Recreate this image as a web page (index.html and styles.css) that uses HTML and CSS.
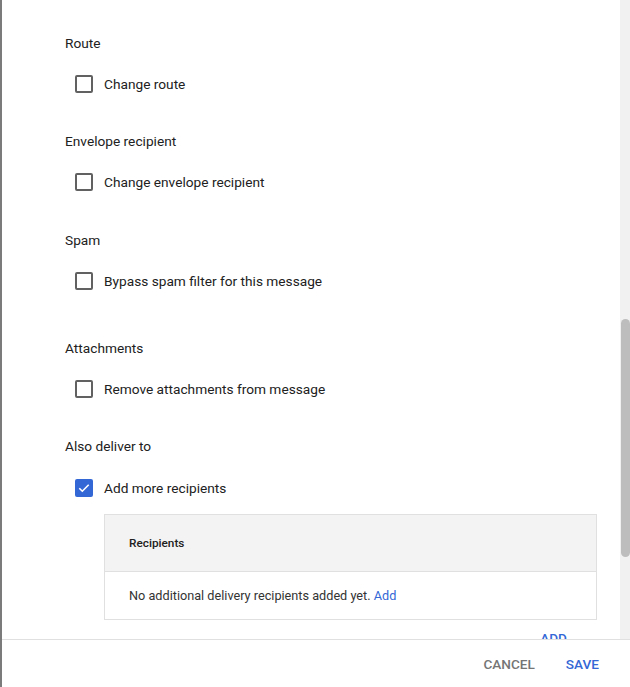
FILE: index.html
```html
<!DOCTYPE html>
<html lang="en">
<head>
<meta charset="utf-8">
<title>Settings</title>
<link rel="stylesheet" href="styles.css">
</head>
<body>
<div class="page">
  <div class="edge"></div>
  <div class="dialog">
    <div class="scroll">
      <div class="content">
        <section class="section">
          <div class="heading">Route</div>
          <label class="check"><span class="box"></span><span>Change route</span></label>
        </section>
        <section class="section section--mid">
          <div class="heading">Envelope recipient</div>
          <label class="check"><span class="box"></span><span>Change envelope recipient</span></label>
        </section>
        <section class="section section--tall">
          <div class="heading">Spam</div>
          <label class="check"><span class="box"></span><span>Bypass spam filter for this message</span></label>
        </section>
        <section class="section">
          <div class="heading">Attachments</div>
          <label class="check"><span class="box"></span><span>Remove attachments from message</span></label>
        </section>
        <section class="section section--last">
          <div class="heading">Also deliver to</div>
          <label class="check"><span class="box box--checked"><svg viewBox="0 0 18 18" width="18" height="18"><path d="M4.3 9.2l3 3 6.4-6.5" fill="none" stroke="#fff" stroke-width="1.6"/></svg></span><span>Add more recipients</span></label>
          <div class="table">
            <div class="table-head">Recipients</div>
            <div class="table-row">No additional delivery recipients added yet.&nbsp;<a class="link">Add</a></div>
          </div>
          <div class="add-row"><button class="btn btn--primary">ADD</button></div>
        </section>
      </div>
      <div class="scrollbar"><div class="thumb"></div></div>
    </div>
    <div class="footer">
      <button class="btn btn--muted">CANCEL</button>
      <button class="btn btn--primary">SAVE</button>
    </div>
  </div>
</div>
</body>
</html>
```

FILE: styles.css
```css
* { box-sizing: border-box; }
html, body { margin: 0; padding: 0; background: #fff; }
body {
  font-family: Roboto, "Liberation Sans", Arial, sans-serif;
  color: #212121;
  font-size: 13.7px;
  line-height: 20px;
  overflow: hidden;
}
.page {
  display: flex;
  width: 630px;
  height: 687px;
}
.edge {
  width: 2px;
  flex: none;
  background: #7b7b7b;
}
.dialog {
  flex: 1;
  display: flex;
  flex-direction: column;
  min-width: 0;
}
.scroll {
  height: 639px;
  display: flex;
  overflow: hidden;
}
.content {
  flex: 1;
  padding: 33px 23px 0 63px;
  overflow: hidden;
}
.section { margin-bottom: 37px; }
.section--mid { margin-bottom: 38px; }
.section--tall { margin-bottom: 47px; }
.section--last { margin-bottom: 0; }
.heading { height: 20px; margin-bottom: 21px; }
.section--last .heading { margin-bottom: 22px; }
.check {
  display: flex;
  align-items: center;
  gap: 11px;
  margin-left: 10px;
  height: 20px;
}
.box {
  width: 18px;
  height: 18px;
  border: 2px solid #616161;
  border-radius: 2px;
  flex: none;
  display: flex;
  align-items: center;
  justify-content: center;
}
.box--checked {
  border: none;
  background: #3367d6;
}
.table {
  margin: 16px 0 0 39px;
  border: 1px solid #e0e0e0;
}
.table-head {
  height: 57px;
  background: #f3f3f3;
  border-bottom: 1px solid #e0e0e0;
  display: flex;
  align-items: center;
  padding-left: 24px;
  font-size: 11.8px;
  font-weight: 500;
  color: #212121;
}
.table-row {
  height: 47px;
  display: flex;
  align-items: center;
  padding-left: 24px;
  font-size: 12.7px;
  color: #333;
}
.link { color: #3367d6; cursor: pointer; }
.add-row {
  display: flex;
  justify-content: flex-end;
  margin-top: 8px;
  padding-right: 30px;
}
.btn {
  font-family: Roboto, "Liberation Sans", Arial, sans-serif;
  font-size: 13.6px;
  font-weight: 500;
  line-height: 20px;
  background: none;
  border: none;
  padding: 0;
  cursor: pointer;
}
.btn--primary { color: #3367d6; }
.btn--muted { color: #757575; }
.scrollbar {
  width: 10px;
  flex: none;
  background: #f1f1f1;
  padding-top: 319px;
  display: flex;
  justify-content: center;
}
.thumb {
  width: 9px;
  height: 238px;
  border-radius: 5px;
  background: #bdbdbd;
}
.footer {
  flex: 1;
  border-top: 1px solid #e0e0e0;
  display: flex;
  justify-content: flex-end;
  align-items: center;
  gap: 31px;
  padding: 0 31px 0 0;
}
```
